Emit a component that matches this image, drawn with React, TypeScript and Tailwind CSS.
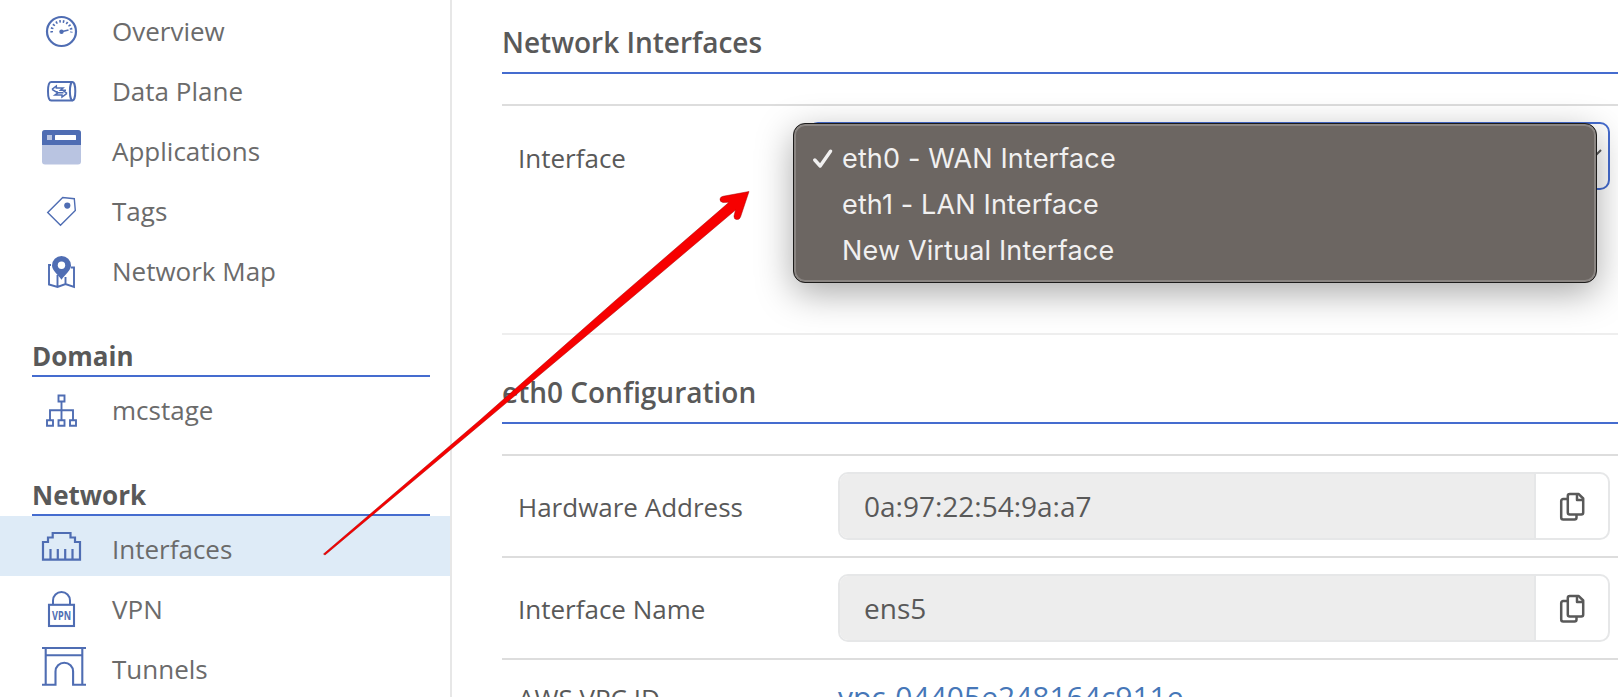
import React from "react";

const BLUE = "#4f6db3";

type IconProps = { children: React.ReactNode };

function Glyph({ children }: IconProps) {
  return (
    <svg width="60" height="60" viewBox="0 0 60 60" fill="none" stroke={BLUE} strokeWidth="2" className="shrink-0">
      {children}
    </svg>
  );
}

const icons: Record<string, React.ReactNode> = {
  overview: (
    <Glyph>
      <circle cx="29.5" cy="33.5" r="14.5" strokeWidth="2.2" />
      <path d="M19.8 34.5a9.8 9.8 0 1 1 19.4 0" strokeWidth="2.6" strokeDasharray="1.6 2" />
      <path d="M29.5 33.8L36.5 32" strokeWidth="1.6" />
      <circle cx="29.5" cy="33.8" r="2.2" fill={BLUE} stroke="none" />
    </Glyph>
  ),
  data: (
    <Glyph>
      <path d="M19 24H40.5M19 42.6H40.5" strokeWidth="2" />
      <path d="M19 24C15 24.5 15 42 19 42.6" strokeWidth="2" />
      <ellipse cx="40.6" cy="33.3" rx="2.7" ry="9.2" strokeWidth="2" />
      <path
        d="M20 31.3L24.3 28V30H31L28.5 32.2H34M20 31.3L25 34.5V33M35 35.3L30.5 32.2M35 35.3L30 39V37H23L26 34.8H31.5"
        strokeWidth="1.5"
      />
    </Glyph>
  ),
  applications: (
    <Glyph>
      <rect x="10" y="12" width="39" height="34.5" rx="3" fill="#b9c4e1" stroke="none" />
      <path d="M10 27V15a3 3 0 0 1 3-3H46a3 3 0 0 1 3 3V27Z" fill={BLUE} stroke="none" />
      <rect x="15" y="17" width="5" height="5" fill="#b9c4e1" stroke="none" />
      <rect x="23" y="17" width="21" height="5" rx=".6" fill="#fff" stroke="none" />
    </Glyph>
  ),
  tags: (
    <Glyph>
      <path d="M15.7 34.5L30.7 19.6L42.3 20.7L43.3 32.5L28.5 47.2Z" strokeWidth="1.4" />
      <circle cx="35.3" cy="27.6" r="3.1" fill={BLUE} stroke="none" />
    </Glyph>
  ),
  map: (
    <Glyph>
      <path d="M19 27H17V46.5L25.5 49L33.5 46L42 49V29.5H39M25.5 37V49M33.5 39V46" strokeWidth="1.9" />
      <path
        d="M29.5 41.8C26 36.5 20 32.5 20 27.5a9.5 9.5 0 0 1 19 0C39 32.5 33 36.5 29.5 41.8Z"
        fill={BLUE}
        stroke="none"
      />
      <circle cx="29.5" cy="27.3" r="3.7" fill="#fff" stroke="none" />
    </Glyph>
  ),
  domain: (
    <Glyph>
      <path
        d="M26.5 18.5h6v6h-6zM15 43.2h6v5.6h-6zM26.5 43.2h6v5.6h-6zM38 43.2h6v5.6h-6z"
        strokeWidth="1.9"
      />
      <path d="M29.5 25V43M18 43V33.3H41V43" strokeWidth="1.9" />
    </Glyph>
  ),
  interfaces: (
    <Glyph>
      <path d="M11 43.7V26H16V21.5H20.7V17H38.5V21.5H43V26H48V43.7Z" strokeWidth="2.2" />
      <path d="M18.5 33V43M25.8 33V43M33.2 33V43M40.5 33V43" strokeWidth="2.2" />
    </Glyph>
  ),
  vpn: (
    <Glyph>
      <rect x="17" y="28.8" width="25" height="21.2" strokeWidth="2.1" />
      <path d="M21 28.5V24.5a8.5 8.5 0 0 1 17 0V28.5" />
      <text
        x="29.6"
        y="44"
        textAnchor="middle"
        fontSize="12"
        fontWeight="700"
        fontFamily="Open Sans, sans-serif"
        textLength="19"
        lengthAdjust="spacingAndGlyphs"
        fill={BLUE}
        stroke="none"
      >
        VPN
      </text>
    </Glyph>
  ),
  tunnels: (
    <Glyph>
      <path
        d="M10 12H54M14 19.3H50M13.7 12V49M50.3 12V49M10 48.7H23.5V35.5a8.8 8.8 0 0 1 17.6 0V48.7H54"
        strokeWidth="2.1"
      />
    </Glyph>
  ),
};

function NavItem({ icon, label, active = false }: { icon: string; label: string; active?: boolean }) {
  return (
    <li className={active ? "flex h-[60px] items-center bg-[#deebf7] pl-8" : "flex h-[60px] items-center pl-8"}>
      <span className="flex w-20 shrink-0">{icons[icon]}</span>
      <a className="pt-[5px] text-[26px] leading-9 text-[#6b6b6b]">{label}</a>
    </li>
  );
}

function NavHeading({ label }: { label: string }) {
  return (
    <h2 className="mr-5 ml-8 flex h-[79px] items-end border-b-2 border-[#456ccf] text-[26px] leading-[38px] font-bold text-[#595959]">
      {label}
    </h2>
  );
}

function SectionTitle({ label }: { label: string }) {
  return (
    <h3 className="border-b-2 border-[#456ccf] pb-2.5 text-[28px] leading-10 font-semibold text-[#595959]">{label}</h3>
  );
}

function CopyIcon() {
  return (
    <svg
      width="26"
      height="30"
      viewBox="0 0 26 30"
      fill="none"
      stroke="#595959"
      strokeWidth="2.5"
      strokeLinejoin="round"
      className="mt-px"
    >
      <path d="M8.6 7H4.2a2 2 0 0 0-2 2V25.5a2 2 0 0 0 2 2H15.5a2 2 0 0 0 2-2V23" />
      <path d="M10.8 1.9H19.5L24.2 6.5V20.5a2 2 0 0 1-2 2H10.8a2 2 0 0 1-2-2V3.9a2 2 0 0 1 2-2Z" />
      <path d="M18 2V8H24" />
    </svg>
  );
}

function FieldRow({ label, value }: { label: string; value: string }) {
  return (
    <div className="flex h-[102px] border-t-2 border-[#dddddd] pt-4 pl-4">
      <span className="w-80 pt-[17px] text-[26px] leading-9">{label}</span>
      <div className="flex h-[68px] w-[772px] overflow-hidden rounded-[10px] border-2 border-[#e6e7e8]">
        <span className="flex-1 border-r-2 border-[#e6e7e8] bg-[#ededed] pt-3 pl-6 text-[28px] leading-10">
          {value}
        </span>
        <button className="flex w-[72px] items-center justify-center">
          <CopyIcon />
        </button>
      </div>
    </div>
  );
}

const options = ["eth0 - WAN Interface", "eth1 - LAN Interface", "New Virtual Interface"];

function OptionMenu() {
  return (
    <ul className="absolute top-[17px] left-[291px] h-[160px] w-[804px] rounded-[12px] border border-[#1d1c1b] bg-[#6c6662] pt-[11px] font-['Inter',sans-serif] text-[27px] text-[#f1f0f0] shadow-[inset_0_0_0_2px_#8a8582,0_10px_36px_rgba(0,0,0,0.34)]">
      {options.map((option, index) => (
        <li key={option} className="flex h-[46px] items-center pl-[19px]">
          <span className="w-[29px]">
            {index === 0 && (
              <svg
                width="20"
                height="20"
                viewBox="0 0 20 20"
                fill="none"
                stroke="#f1f0f0"
                strokeWidth="3.4"
                strokeLinecap="round"
                strokeLinejoin="round"
                className="mt-0.5"
              >
                <path d="M1.8 11L7.2 17L17.5 2.2" />
              </svg>
            )}
          </span>
          <span className="pt-0.5 tracking-[0.15px]">{option}</span>
        </li>
      ))}
    </ul>
  );
}

export default function App() {
  return (
    <div className="relative flex h-[697px] w-full overflow-hidden bg-white font-['Open_Sans',sans-serif] text-[#595959]">
      <aside className="w-[452px] shrink-0 border-r-2 border-[#e7e7e7]">
        <ul className="-mt-0.5">
          <NavItem icon="overview" label="Overview" />
          <NavItem icon="data" label="Data Plane" />
          <NavItem icon="applications" label="Applications" />
          <NavItem icon="tags" label="Tags" />
          <NavItem icon="map" label="Network Map" />
        </ul>
        <NavHeading label="Domain" />
        <ul>
          <NavItem icon="domain" label="mcstage" />
        </ul>
        <NavHeading label="Network" />
        <ul>
          <NavItem icon="interfaces" label="Interfaces" active />
          <NavItem icon="vpn" label="VPN" />
          <NavItem icon="tunnels" label="Tunnels" />
        </ul>
      </aside>

      <main className="ml-[50px] flex-1 pt-[22px]">
        <SectionTitle label="Network Interfaces" />
        <div className="relative mt-[30px] flex h-[231px] border-t-2 border-b-2 border-t-[#dddddd] border-b-[#eeeeee] pt-4 pl-4">
          <span className="w-[290px] pt-[18px] text-[26px] leading-9">Interface</span>
          <div className="flex h-[68px] w-[802px] items-center justify-end rounded-[10px] border-2 border-[#456ccf] pr-1.5">
            <svg width="24" height="14" viewBox="0 0 24 14" fill="none" stroke="#595959" strokeWidth="2">
              <path d="M1 1L12 12L23 1" />
            </svg>
          </div>
          <OptionMenu />
        </div>
        <div className="pt-[37px]">
          <SectionTitle label="eth0 Configuration" />
        </div>
        <div className="pt-[30px]">
          <FieldRow label="Hardware Address" value="0a:97:22:54:9a:a7" />
          <FieldRow label="Interface Name" value="ens5" />
          <div className="flex h-[102px] border-t-2 border-[#dddddd] pt-5 pl-4">
            <span className="w-80 text-[26px] leading-9">AWS VPC ID</span>
            <a className="text-[30px] leading-[34px] text-[#4677b8]">vpc-04405e248164c911e</a>
          </div>
        </div>
      </main>

      <svg className="pointer-events-none absolute inset-0" width="1618" height="697" viewBox="0 0 1618 697">
        <path
          d="M323.5 554L480 420L616 300L729 202.300L723 202.500Q719.800 202 720 199Q720.300 196.800 723 196.300L749 191.500L740.500 217Q739.500 220 736.500 219.500Q733.800 219 734 216L735.500 210L629 300L480 425L325 555Z"
          fill="#f70000"
          stroke="#a80000"
          strokeWidth=".5"
        />
      </svg>
    </div>
  );
}
